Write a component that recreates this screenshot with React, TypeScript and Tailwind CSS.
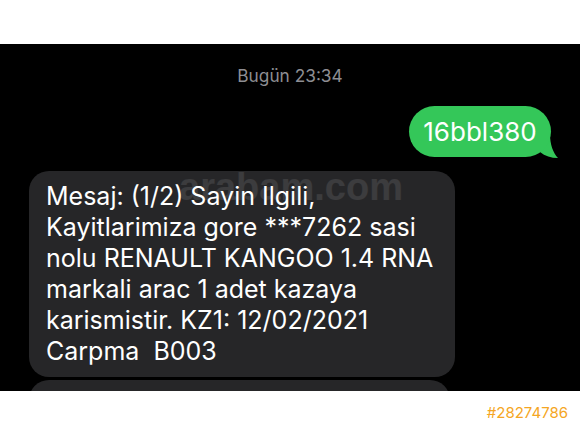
import React from "react";

export default function App() {
  const lines = [
    "Mesaj: (1/2) Sayin Ilgili,",
    "Kayitlarimiza gore ***7262 sasi",
    "nolu RENAULT KANGOO 1.4 RNA",
    "markali arac 1 adet kazaya",
    "karismistir. KZ1: 12/02/2021",
    "Carpma  B003",
  ];
  return (
    <div className="w-[580px] h-[435px] bg-white flex flex-col font-['Inter',sans-serif]">
      <div className="h-[44px] shrink-0 bg-white" />
      <div className="relative h-[347px] shrink-0 bg-black overflow-hidden flex flex-col">
        <div className="mt-[22px] text-center text-[17.3px] leading-[20px] text-[#8e8e93]">Bugün 23:34</div>
        <div className="mt-[20px] self-end mr-[29px] relative">
          <div className="relative z-10 h-[51px] w-[142px] rounded-[26px] bg-[#34c759] flex items-center justify-center text-white text-[26px] leading-none">
            16bbl380
          </div>
          <svg className="absolute right-[-7px] bottom-[-1px] z-0" width="24" height="24" viewBox="0 0 24 24">
            <path d="M10 0 L16 0 C16 10 19 19 24 24 C17 24 11 22 6 18 Z" fill="#34c759" />
          </svg>
        </div>
        <div className="mt-[14px] ml-[29px] w-[426px] rounded-[20px] bg-[#262628] pl-[17px] pr-[8px] py-[10px] text-white text-[25px] leading-[31px] whitespace-pre">
          {lines.map((l, i) => (
            <div key={i}>{l}</div>
          ))}
        </div>
        <div className="mt-[3px] ml-[29px] w-[421px] h-[60px] shrink-0 rounded-[20px] bg-[#262628]" />
        <div className="absolute left-0 right-0 top-[124px] text-center font-['Liberation_Sans',sans-serif] font-bold text-[38px] leading-none text-white/10 pl-[2px] pointer-events-none">
          arabam.com
        </div>
      </div>
      <div className="flex-1 bg-white flex items-center justify-end pr-[12px]">
        <span className="text-[15px] text-[#f5a623] font-['Inter',sans-serif]">#28274786</span>
      </div>
    </div>
  );
}
